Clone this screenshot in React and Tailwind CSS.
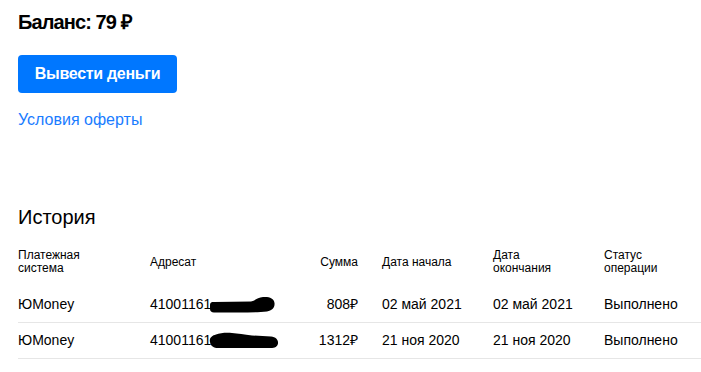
import React from "react";

const cols = "grid grid-cols-[132px_150px_82px_111px_111px_1fr]";

function Blob1() {
  return (
    <svg width="66" height="17" viewBox="0 0 66 17" className="block shrink-0 -ml-[2px] mt-[-1px]">
      <path
        d="M1 9 C1 6.5 2.5 6 5 6 L42 5.5 C46 4.5 49 1.5 54 1 C60 0.5 65 2 65.5 7 C66 12 63 14.5 58 15.5 C50 16.5 40 16.5 30 16.5 L5 16.5 C2.5 16.5 1 15 1 13 Z"
        fill="#000"
      />
    </svg>
  );
}

function Blob2() {
  return (
    <svg width="70" height="17" viewBox="0 0 70 17" className="block shrink-0 -ml-[2px] mt-[-1px]">
      <path
        d="M1 10 C0 6 3 3.5 7 2.5 C11 1 17 0.5 23 1 C29 1.5 35 2.5 43 3.5 L62 4.5 C67 5 69.5 8 69 11.5 C68.5 15 65 16.5 60 16 L9 16 C5 16 1.5 14 1 10 Z"
        fill="#000"
      />
    </svg>
  );
}

function Row({ sys, addr, blob, sum, start, end, status }) {
  return (
    <div className={`${cols} h-[36px] items-center border-b border-[#e6e6e6] text-[14px] text-black`}>
      <div>{sys}</div>
      <div className="flex items-center">
        <span>{addr}</span>
        {blob}
      </div>
      <div className="text-right pr-[24px]">{sum}₽</div>
      <div>{start}</div>
      <div>{end}</div>
      <div>{status}</div>
    </div>
  );
}

export default function App() {
  return (
    <div className="w-[701px] h-[372px] overflow-hidden bg-white pl-[18px] pt-[10px] font-['Liberation_Sans',Arial,sans-serif] text-black">
      <div className="text-[20px] leading-[24px] font-bold tracking-[-0.9px]">Баланс: 79 ₽</div>
      <button className="mt-[21px] h-[38px] w-[159px] rounded-[4px] bg-[#0077ff] text-white text-[16px] font-bold leading-[20px] tracking-[-0.3px]">
        Вывести деньги
      </button>
      <div className="mt-[17px] text-[16px] leading-[20px] text-[#1a7cff]">Условия оферты</div>
      <div className="mt-[75px] text-[20px] leading-[24px]">История</div>
      <div className={`${cols} mt-[20px] pb-[12px] items-center text-[12px] leading-[13px]`}>
        <div>Платежная<br />система</div>
        <div>Адресат</div>
        <div className="text-right pr-[24px]">Сумма</div>
        <div>Дата начала</div>
        <div>Дата<br />окончания</div>
        <div>Статус<br />операции</div>
      </div>
      <Row sys="ЮMoney" addr="41001161" blob={<Blob1 />} sum="808" start="02 май 2021" end="02 май 2021" status="Выполнено" />
      <Row sys="ЮMoney" addr="41001161" blob={<Blob2 />} sum="1312" start="21 ноя 2020" end="21 ноя 2020" status="Выполнено" />
    </div>
  );
}
